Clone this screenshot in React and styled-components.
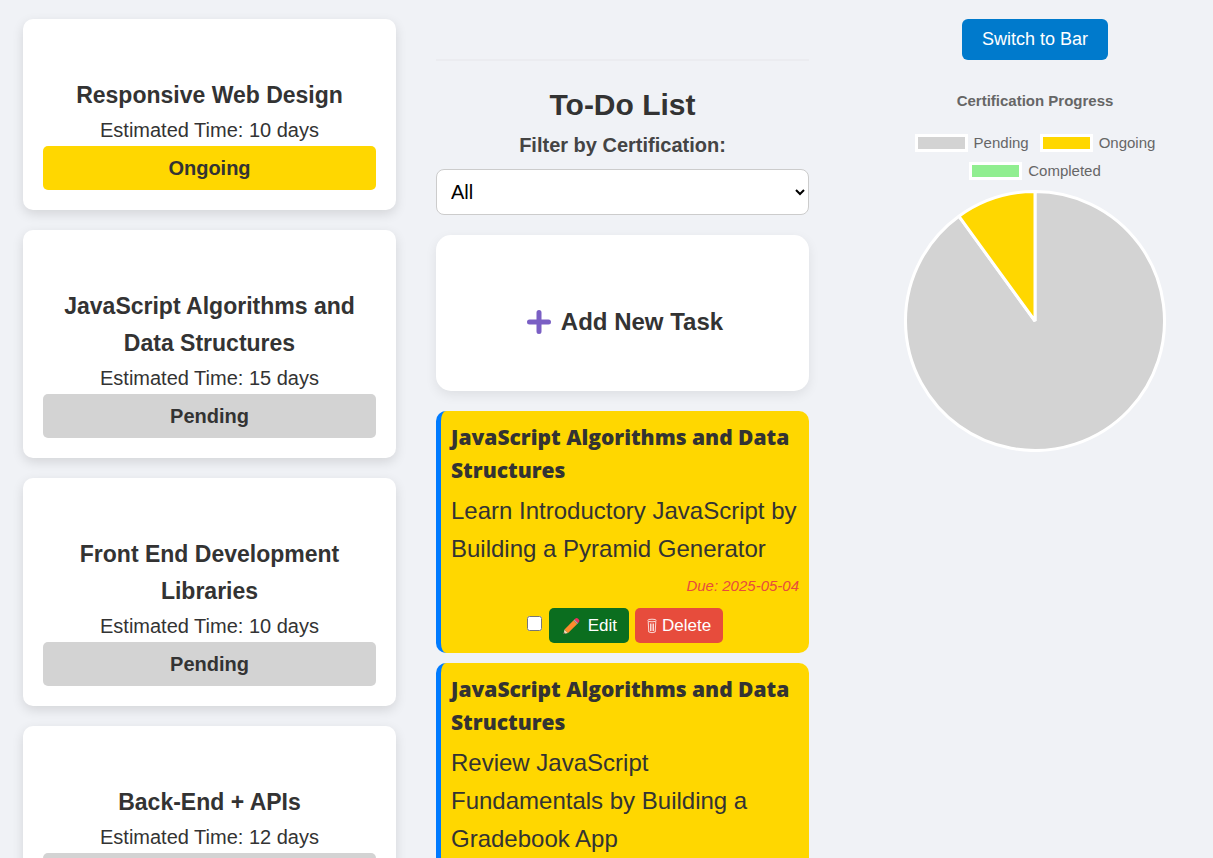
import React, { useState } from "react";
import styled, { createGlobalStyle } from "styled-components";

const GlobalStyle = createGlobalStyle`
  *, *::before, *::after { box-sizing: border-box; }
  html, body { margin: 0; }
  body {
    background: #f0f2f6;
    color: #333;
    font-family: "Liberation Sans", Arial, sans-serif;
    font-size: 20px;
    line-height: 32px;
  }
`;

const STATUS_COLORS = {
  Pending: "#d3d3d3",
  Ongoing: "#ffd700",
  Completed: "#90ee90",
};

const Page = styled.div`
  display: grid;
  grid-template-columns: 373fr 373fr 364fr;
  gap: 40px;
  align-items: start;
  height: 100vh;
  overflow: hidden;
  padding: 19px 0 0 23px;
`;

const CertList = styled.section`
  display: flex;
  flex-direction: column;
  gap: 20px;
`;

const CertCard = styled.article`
  background: #fff;
  border-radius: 10px;
  box-shadow: 0 4px 12px rgba(0, 0, 0, 0.12);
  padding: 58px 20px 20px;
  text-align: center;
`;

const CertTitle = styled.h2`
  margin: 0;
  padding: 0 10px;
  font-size: 23px;
  line-height: 37px;
`;

const CertTime = styled.p`
  margin: 0;
`;

const Status = styled.p`
  margin: 0;
  padding: 6px;
  border-radius: 5px;
  background: ${({ $status }) => STATUS_COLORS[$status]};
  font-weight: bold;
`;

const TodoColumn = styled.main`
  display: flex;
  flex-direction: column;
  padding-top: 40px;
`;

const Divider = styled.hr`
  width: 100%;
  margin: 0 0 20px;
  border: 0;
  border-top: 2px solid #ebecf0;
`;

const TodoHeading = styled.h1`
  margin: 0;
  font-size: 30px;
  line-height: 48px;
  text-align: center;
`;

const FilterLabel = styled.label`
  margin-bottom: 8px;
  color: #444;
  font-weight: bold;
  text-align: center;
`;

const FilterSelect = styled.select`
  width: 100%;
  height: 46px;
  margin-bottom: 20px;
  padding: 10px;
  border: 1px solid #ccc;
  border-radius: 8px;
  background: #fff;
  color: #000;
  font: inherit;
  line-height: 24px;
`;

const AddTask = styled.button`
  display: flex;
  align-items: center;
  justify-content: center;
  gap: 9px;
  margin-bottom: 20px;
  padding: 68px 20px 50px 24px;
  border: 0;
  border-radius: 15px;
  background: #fff;
  box-shadow: 0 4px 12px rgba(0, 0, 0, 0.08);
  color: #333;
  font: bold 24px/38px "Liberation Sans", Arial, sans-serif;
`;

const TaskList = styled.ul`
  display: flex;
  flex-direction: column;
  gap: 10px;
  margin: 0;
  padding: 0;
  list-style: none;
`;

const TaskCard = styled.li`
  padding: 10px;
  border-left: 5px solid #007bff;
  border-radius: 10px;
  background: #ffd700;
`;

const TaskCert = styled.h3`
  margin: 0 0 5px;
  font-family: "Arial Black", "Open Sans", sans-serif;
  font-size: 21px;
  font-weight: 800;
  line-height: 33px;
`;

const TaskText = styled.p`
  margin: 0;
  font-size: 24px;
  line-height: 38px;
`;

const Due = styled.p`
  margin: 6px 0 10px;
  color: #e74c3c;
  font-size: 15px;
  font-style: italic;
  line-height: 24px;
  text-align: right;
`;

const Actions = styled.div`
  display: flex;
  justify-content: center;
  gap: 6px;
`;

const DoneBox = styled.input`
  width: 15px;
  height: 15px;
  margin: 8px 1px 0 0;
`;

const ActionButton = styled.button`
  display: flex;
  align-items: center;
  gap: ${({ $gap }) => $gap}px;
  height: 35px;
  padding: 0 12px;
  border: 0;
  border-radius: 5px;
  background: ${({ $color }) => $color};
  color: #fff;
  font: 17px/20px "Liberation Sans", Arial, sans-serif;
`;

const ChartColumn = styled.aside`
  display: flex;
  flex-direction: column;
  align-items: center;
  padding-left: 8px;
`;

const SwitchButton = styled.button`
  padding: 10px 20px;
  border: 0;
  border-radius: 6px;
  background: #007acc;
  color: #fff;
  font: 18px/21px "Liberation Sans", Arial, sans-serif;
`;

const ChartTitle = styled.h2`
  margin: 32px 0 24px;
  color: #666;
  font-size: 15px;
  line-height: 18px;
`;

const Legend = styled.ul`
  display: flex;
  flex-wrap: wrap;
  justify-content: center;
  gap: 10px 11px;
  width: 262px;
  margin: 0 0 10px;
  padding: 0;
  list-style: none;
`;

const LegendItem = styled.li`
  display: flex;
  align-items: center;
  gap: 6px;
  height: 18px;
  color: #666;
  font-size: 15px;
  line-height: 18px;
`;

const Swatch = styled.span`
  width: 53px;
  height: 18px;
  border: 3px solid #fff;
  background: ${({ $status }) => STATUS_COLORS[$status]};
`;

const PieSvg = styled.svg`
  display: block;
  width: 262px;
  height: 262px;
`;

const CERTS = [
  { title: "Responsive Web Design", days: 10, status: "Ongoing" },
  { title: "JavaScript Algorithms and Data Structures", days: 15, status: "Pending" },
  { title: "Front End Development Libraries", days: 10, status: "Pending" },
  { title: "Back-End + APIs", days: 12, status: "Pending" },
];

const TASKS = [
  {
    cert: "JavaScript Algorithms and Data Structures",
    text: "Learn Introductory JavaScript by Building a Pyramid Generator",
    due: "2025-05-04",
  },
  {
    cert: "JavaScript Algorithms and Data Structures",
    text: "Review JavaScript Fundamentals by Building a Gradebook App",
    due: "2025-05-04",
  },
];

const PlusIcon = () => (
  <svg width="26" height="26" viewBox="0 0 26 26" aria-hidden="true">
    <path d="M13 3.500v19M3.500 13h19" stroke="#7a5fc4" strokeWidth="5" strokeLinecap="round" />
  </svg>
);

const PencilIcon = () => (
  <svg width="20" height="20" viewBox="0 0 20 20" aria-hidden="true">
    <path d="M2.500 18l1-4.600 3.600 3.600z" fill="#f8d7b0" />
    <path d="M2.500 18l.4-1.800 1.400 1.400z" fill="#443c3c" />
    <path d="M3.500 13.400L12.600 4.300l3.600 3.600-9.100 9.100z" fill="#ff8b2e" />
    <path d="M12.600 4.300l1-1 3.600 3.600-1 1z" fill="#b9a3ac" />
    <path d="M13.500 3.400l.9-.9q1.300-1.100 2.700.2l.7.700q1.300 1.400.2 2.700l-.9.900z" fill="#f0305c" />
  </svg>
);

const TrashIcon = () => (
  <svg width="10" height="16" viewBox="0 0 10 16" fill="none" stroke="#fff" aria-hidden="true">
    <ellipse cx="5" cy="2.500" rx="4.300" ry="1.300" strokeWidth=".8" />
    <path d="M1.200 3.500l.6 10.500q3.200 1.400 6.400 0L8.800 3.500M3.500 5.500v7.500M5 5.500v7.500M6.500 5.500v7.500" strokeWidth=".8" />
  </svg>
);

const Pie = () => (
  <PieSvg viewBox="0 0 262 262" role="img" aria-label="Certification Progress">
    <g stroke="#fff" strokeWidth="3" strokeLinejoin="bevel">
      <path d="M131 131V1.500A129.500 129.500 0 1 1 54.880 26.230Z" fill={STATUS_COLORS.Pending} />
      <path d="M131 131L54.880 26.230A129.500 129.500 0 0 1 131 1.500Z" fill={STATUS_COLORS.Ongoing} />
    </g>
  </PieSvg>
);

const Task = ({ cert, text, due }) => (
  <TaskCard>
    <TaskCert>{cert}</TaskCert>
    <TaskText>{text}</TaskText>
    <Due>Due: {due}</Due>
    <Actions>
      <DoneBox type="checkbox" aria-label={`Mark done: ${text}`} />
      <ActionButton type="button" $color="#0b6e1f" $gap={7}>
        <PencilIcon />
        Edit
      </ActionButton>
      <ActionButton type="button" $color="#e74c3c" $gap={5}>
        <TrashIcon />
        Delete
      </ActionButton>
    </Actions>
  </TaskCard>
);

export default function App() {
  const [filter, setFilter] = useState("All");
  const tasks = TASKS.filter((t) => filter === "All" || t.cert === filter);

  return (
    <>
      <GlobalStyle />
      <Page>
        <CertList>
          {CERTS.map((c) => (
            <CertCard key={c.title}>
              <CertTitle>{c.title}</CertTitle>
              <CertTime>Estimated Time: {c.days} days</CertTime>
              <Status $status={c.status}>{c.status}</Status>
            </CertCard>
          ))}
        </CertList>

        <TodoColumn>
          <Divider />
          <TodoHeading>To-Do List</TodoHeading>
          <FilterLabel htmlFor="cert-filter">Filter by Certification:</FilterLabel>
          <FilterSelect id="cert-filter" value={filter} onChange={(e) => setFilter(e.target.value)}>
            <option>All</option>
            {CERTS.map((c) => (
              <option key={c.title}>{c.title}</option>
            ))}
          </FilterSelect>
          <AddTask type="button">
            <PlusIcon />
            Add New Task
          </AddTask>
          <TaskList>
            {tasks.map((t) => (
              <Task key={t.text} {...t} />
            ))}
          </TaskList>
        </TodoColumn>

        <ChartColumn>
          <SwitchButton type="button">Switch to Bar</SwitchButton>
          <ChartTitle>Certification Progress</ChartTitle>
          <Legend>
            {Object.keys(STATUS_COLORS).map((s) => (
              <LegendItem key={s}>
                <Swatch $status={s} />
                {s}
              </LegendItem>
            ))}
          </Legend>
          <Pie />
        </ChartColumn>
      </Page>
    </>
  );
}
